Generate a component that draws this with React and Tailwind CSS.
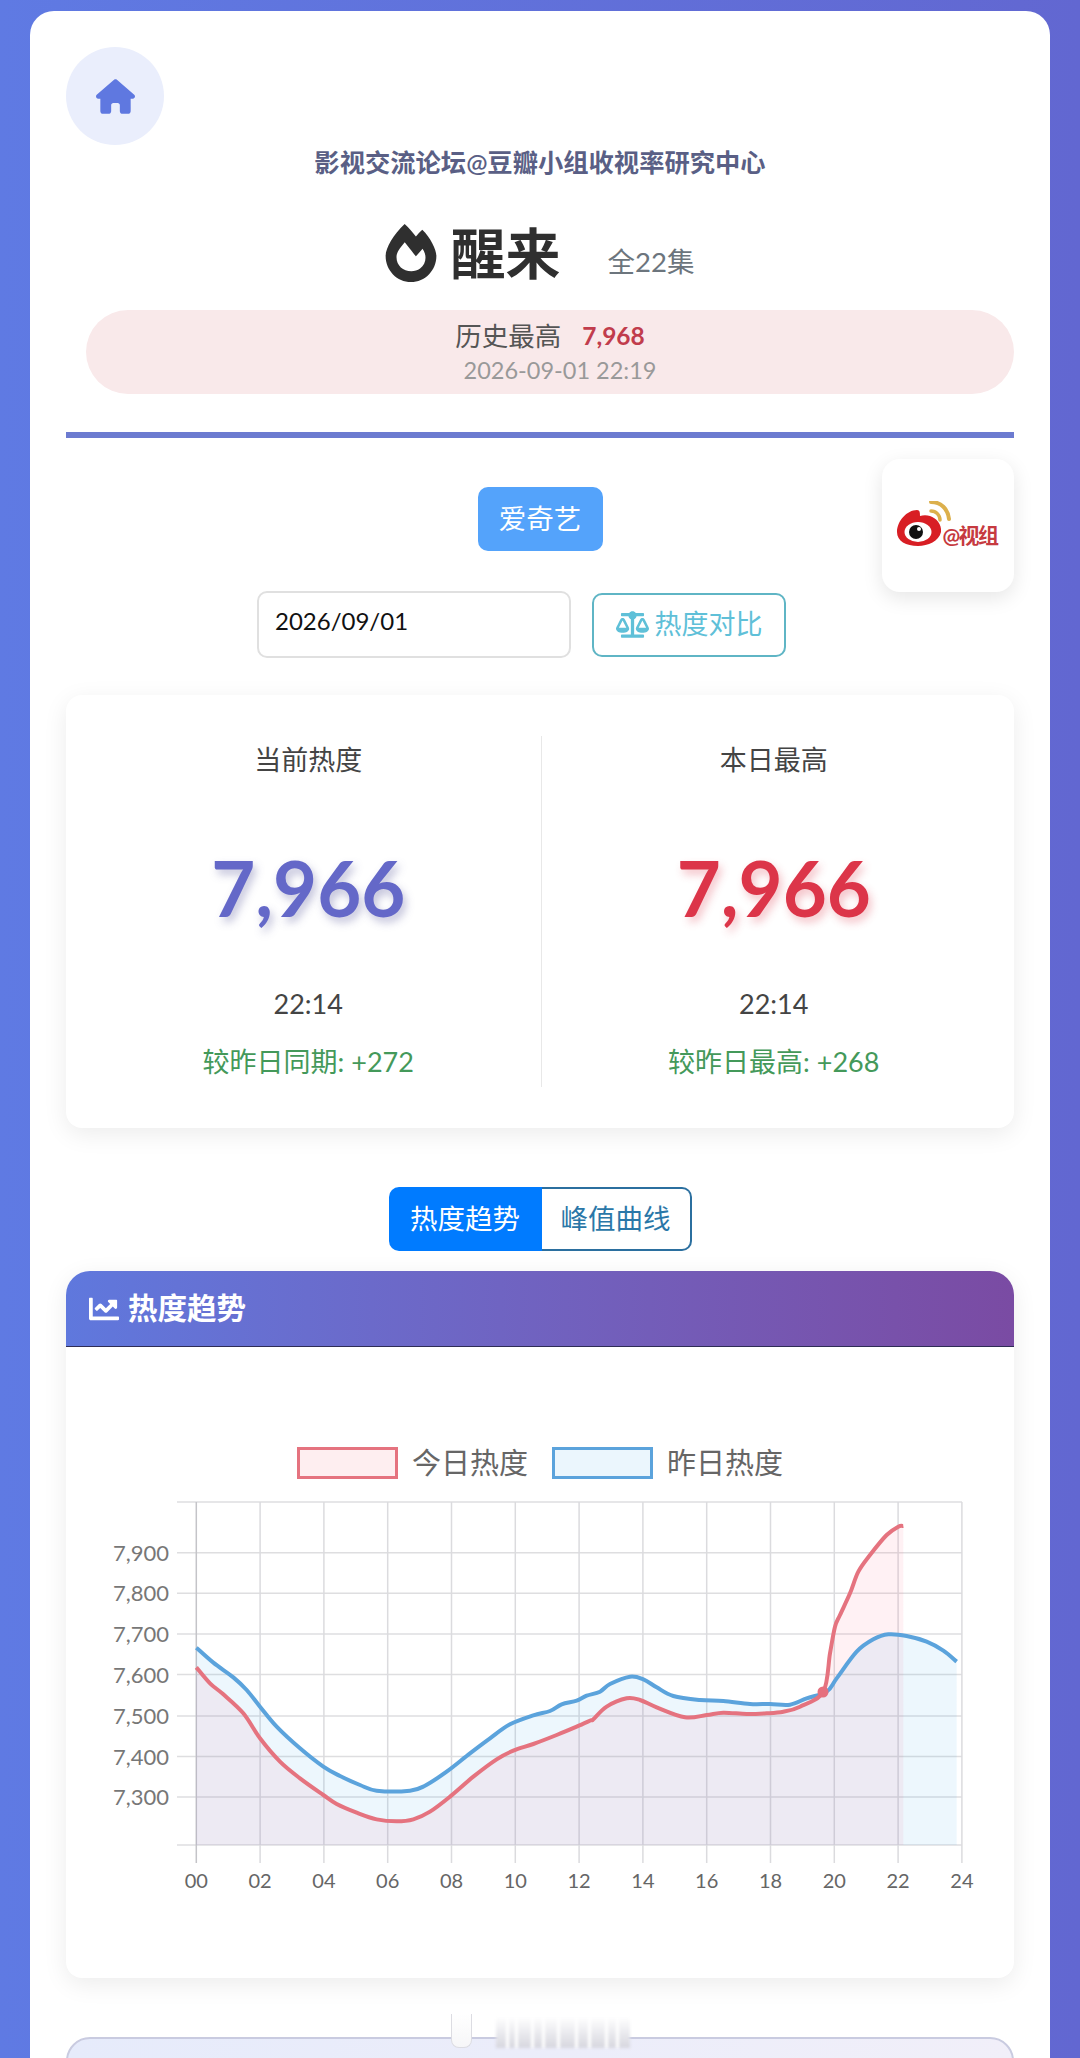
import React from "react";
import { FaFireAlt, FaBalanceScale, FaChartLine } from "react-icons/fa";
import { FaHouse } from "react-icons/fa6";

const FONT = "font-['Lato','Noto_Sans_CJK_SC',sans-serif]";

// curve points read off the chart, in page coordinates
const fromLeft = (pts) => pts.map(([x, y]) => [100 + x / 3, 1480 + y / 3]);
const fromRight = (pts) => pts.map(([x, y]) => [540 + x / 3, 1480 + y / 3]);

const BLUE = [
  ...fromLeft([[289, 503], [340, 548], [400, 592], [440, 630], [480, 680], [530, 740], [600, 805], [670, 860], [720, 888], [780, 915], [830, 932], [930, 932], [975, 917], [1040, 875], [1110, 820], [1170, 775], [1230, 733], [1300, 706], [1350, 693], [1385, 673], [1430, 662], [1460, 647]]),
  ...fromRight([[180, 635], [210, 612], [270, 590], [310, 598], [350, 622], [400, 648], [480, 660], [550, 663], [630, 672], [690, 672], [750, 674], [800, 655], [860, 635], [890, 595], [950, 515], [1000, 478], [1045, 463], [1100, 468], [1160, 485], [1210, 512], [1250, 545]]),
];

const RED = [
  ...fromLeft([[289, 562], [330, 610], [370, 643], [430, 700], [480, 775], [540, 845], [600, 895], [670, 945], [710, 972], [770, 998], [830, 1018], [890, 1024], [940, 1018], [990, 995], [1050, 950], [1120, 890], [1190, 838], [1240, 812], [1300, 792], [1370, 765], [1430, 740], [1475, 720]]),
  ...fromRight([[160, 718], [200, 680], [260, 655], [300, 660], [350, 682], [435, 712], [500, 705], [550, 698], [620, 702], [680, 700], [730, 695], [780, 680], [850, 635], [870, 520], [885, 440], [900, 405], [930, 340], [955, 275], [990, 225], [1040, 165], [1075, 140], [1090, 138]]),
];

const smooth = (pts) => {
  let d = `M${pts[0][0]} ${pts[0][1]}`;
  for (let i = 0; i < pts.length - 1; i++) {
    const p0 = pts[i - 1] || pts[i];
    const p1 = pts[i];
    const p2 = pts[i + 1];
    const p3 = pts[i + 2] || p2;
    const c1x = p1[0] + (p2[0] - p0[0]) / 6;
    const c1y = p1[1] + (p2[1] - p0[1]) / 6;
    const c2x = p2[0] - (p3[0] - p1[0]) / 6;
    const c2y = p2[1] - (p3[1] - p1[1]) / 6;
    d += `C${c1x} ${c1y} ${c2x} ${c2y} ${p2[0]} ${p2[1]}`;
  }
  return d;
};

const area = (pts) => {
  const last = pts[pts.length - 1];
  return `${smooth(pts)}L${last[0]} 1845L${pts[0][0]} 1845Z`;
};

const YS = [
  ["7,900", 1552.7],
  ["7,800", 1593.3],
  ["7,700", 1634],
  ["7,600", 1674.6],
  ["7,500", 1716],
  ["7,400", 1756.5],
  ["7,300", 1797],
];
const XS = ["00", "02", "04", "06", "08", "10", "12", "14", "16", "18", "20", "22", "24"];

const Chart = () => (
  <svg viewBox="66 1495 948 400" className="block w-[948px] h-[400px] mt-[16px]">
    {[1502, ...YS.map((y) => y[1]), 1845].map((y) => (
      <line key={y} x1="177" x2="962" y1={y} y2={y} stroke="#dedee0" strokeWidth="1.5" />
    ))}
    {XS.map((_, i) => {
      const x = 196.3 + i * 63.8;
      return <line key={i} x1={x} x2={x} y1="1502" y2="1863" stroke={i === 0 ? "#c4c4c8" : "#dbdbde"} strokeWidth="1.5" />;
    })}
    <path d={area(RED)} fill="rgba(255,99,132,0.09)" />
    <path d={area(BLUE)} fill="rgba(54,162,235,0.09)" />
    <path d={smooth(BLUE)} fill="none" stroke="#5ba3dc" strokeWidth="4" strokeLinejoin="round" />
    <path d={smooth(RED)} fill="none" stroke="#e5737f" strokeWidth="4" strokeLinejoin="round" />
    <circle cx="823" cy="1692" r="5.5" fill="#e5707e" />
    {YS.map(([label, y]) => (
      <text key={label} x="169" y={y + 8} textAnchor="end" fontSize="22" fill="#777">
        {label}
      </text>
    ))}
    {XS.map((label, i) => (
      <text key={label} x={196.3 + i * 63.8} y="1888" textAnchor="middle" fontSize="20" fill="#666">
        {label}
      </text>
    ))}
  </svg>
);

const WeiboLogo = () => (
  <div className="flex items-end -ml-[3px]">
    <svg width="62" height="46" viewBox="0 0 62 46" className="shrink-0 -mr-[15px]">
      <path d="M36 1c10 0 17 7 18 17" fill="none" stroke="#dcb04c" strokeWidth="4" strokeLinecap="round" />
      <path d="M36 10c5 0 9 4 9 9" fill="none" stroke="#dcb04c" strokeWidth="3.5" strokeLinecap="round" />
      <path d="M2 31C2 20 12 9 22 9c3 0 3 3 3 6 3-1 7-1 10 0 6 2 12 8 11 16-2 9-13 14-23 14C11 45 2 40 2 31z" fill="#d81e24" />
      <ellipse cx="23" cy="31" rx="13.5" ry="10" fill="#fff" />
      <circle cx="21" cy="31" r="7" fill="#111" />
      <circle cx="24" cy="28" r="2" fill="#fff" />
    </svg>
    <span className="text-[21px] leading-[25px] font-bold text-[#c63a40] tracking-[-1.5px]">@视组</span>
  </div>
);

const Stat = ({ label, value, color, shadow, time, diff, className }) => (
  <div className={`flex-1 flex flex-col items-center ${className}`}>
    <div className="text-[27px] leading-[36px] text-[#444] mt-[6px]">{label}</div>
    <div className={`text-[76px] leading-[92px] font-bold mt-[64px] ${color} ${shadow}`}>{value}</div>
    <div className="text-[27px] leading-[36px] text-[#444] mt-[52px]">{time}</div>
    <div className="text-[27px] leading-[36px] text-[#44995a] mt-[22px]">{diff}</div>
  </div>
);

export default function App() {
  return (
    <div className={`${FONT} h-[2058px] overflow-hidden bg-gradient-to-r from-[#5f7ae3] to-[#6267d1] px-[30px] pt-[11px]`}>
      <div className="relative bg-white rounded-t-[24px] px-[36px] pt-[36px] h-[2100px]">
        <button className="w-[98px] h-[98px] rounded-full bg-[#eaeefc] flex items-center justify-center text-[#5f78e0]">
          <FaHouse size={39} />
        </button>

        <div className="text-center text-[25.3px] leading-[34px] font-semibold text-[#5a5f85]">
          影视交流论坛@豆瓣小组收视率研究中心
        </div>

        <div className="flex items-center justify-center mt-[44px] h-[60px] pr-[4px]">
          <FaFireAlt size={58} className="text-[#2f2f2f]" />
          <h1 className="text-[55px] leading-[60px] font-bold text-[#2f2f2f] ml-[11px]">醒来</h1>
          <span className="text-[27.5px] leading-[36px] text-[#6c757d] ml-[47px] mt-[18px]">全22集</span>
        </div>

        <div className="ml-[20px] mt-[27px] h-[84px] rounded-[42px] bg-[#f9e9ea] flex flex-col items-center justify-center">
          <div className="flex items-center text-[26.5px] leading-[36px] text-[#555]">
            历史最高
            <span className="ml-[21px] text-[24.5px] font-bold text-[#c13c4c]">7,968</span>
          </div>
          <div className="text-[23.5px] leading-[32px] text-[#999] ml-[20px]">2026-09-01 22:19</div>
        </div>

        <div className="h-[6px] bg-[#6c7bd0] mt-[38px]" />

        <div className="relative">
          <div className="absolute right-0 top-[21px] w-[132px] h-[133px] rounded-[18px] bg-white shadow-[0_6px_20px_rgba(0,0,0,0.1)] flex items-center justify-center pb-[4px]">
            <WeiboLogo />
          </div>

          <div className="flex justify-center pt-[49px]">
            <button className="w-[125px] h-[64px] rounded-[10px] bg-[#54a3fb] text-white text-[27.5px]">爱奇艺</button>
          </div>

          <div className="flex items-center justify-center gap-[21px] mt-[40px] pr-[37px]">
            <div className="w-[314px] h-[67px] rounded-[10px] border-2 border-[#e0e0e0] bg-white px-[16px] pt-[10px] text-[24px] leading-[36px] text-[#111]">
              2026/09/01
            </div>
            <button className="w-[194px] h-[64px] rounded-[10px] border-2 border-[#5fb5c5] text-[#5fc0d8] text-[27px] flex items-center justify-center gap-[6px]">
              <FaBalanceScale size={33} />
              热度对比
            </button>
          </div>
        </div>

        <div className="mt-[37px] h-[433px] rounded-[16px] bg-white shadow-[0_6px_24px_rgba(0,0,0,0.08)] flex items-stretch pt-[41px] pb-[41px]">
          <Stat
            className="pl-[10px]"
            label="当前热度"
            value="7,966"
            color="text-[#6468c8]"
            shadow="[text-shadow:3px_5px_8px_rgba(80,80,150,0.35)]"
            time="22:14"
            diff="较昨日同期: +272"
          />
          <div className="w-[1px] bg-[#e8e8e8]" />
          <Stat
            className="pr-[8px]"
            label="本日最高"
            value="7,966"
            color="text-[#dc3549]"
            shadow="[text-shadow:3px_5px_8px_rgba(220,53,73,0.3)]"
            time="22:14"
            diff="较昨日最高: +268"
          />
        </div>

        <div className="flex justify-center mt-[59px]">
          <div className="flex h-[64px] w-[303px] text-[27.5px]">
            <div className="w-[153px] rounded-l-[10px] bg-[#007bff] text-white flex items-center justify-center">热度趋势</div>
            <div className="flex-1 rounded-r-[10px] border-2 border-l-0 border-[#2b6f9f] bg-white text-[#2a77a8] flex items-center justify-center">峰值曲线</div>
          </div>
        </div>

        <div className="mt-[20px] h-[707px] rounded-[24px] rounded-b-[16px] bg-white shadow-[0_6px_24px_rgba(0,0,0,0.08)]">
          <div className="h-[76px] rounded-t-[24px] bg-gradient-to-r from-[#5f78dd] to-[#7a4ba3] border-b border-[#2f2d55] flex items-center pl-[23px] gap-[9px] text-white">
            <FaChartLine size={30} />
            <span className="text-[29.5px] font-semibold">热度趋势</span>
          </div>
          <div className="flex justify-center mt-[100px] h-[32px]">
            <div className="w-[101px] border-[3px] border-[#e5737f] bg-[#feeef0]" />
            <span className="ml-[14px] text-[29px] leading-[32px] text-[#666]">今日热度</span>
            <div className="ml-[24px] w-[101px] border-[3px] border-[#5ba3dc] bg-[#ebf6fd]" />
            <span className="ml-[14px] text-[29px] leading-[32px] text-[#666]">昨日热度</span>
          </div>
          <Chart />
        </div>

        <div className="relative mt-[59px] h-[120px] rounded-[24px] border-2 border-[#c9cbe0] bg-gradient-to-r from-[#e6ebfb] to-[#f1eff9]">
          <div className="absolute left-[383px] -top-[25px] w-[21px] h-[34px] rounded-b-[8px] border-x border-b border-[#dcdce2] bg-gradient-to-b from-white to-[#f6f6f8] blur-[0.5px]" />
          <div className="absolute left-[428px] -top-[22px] h-[31px] w-[134px] flex gap-[3px] bg-white blur-[1.5px]">
            {[10, 6, 14, 8, 12, 16, 10, 14, 9, 11].map((w, i) => (
              <div key={i} className="h-full bg-gradient-to-b from-white to-[#d6d6de]" style={{ width: w }} />
            ))}
          </div>
        </div>
      </div>
    </div>
  );
}
